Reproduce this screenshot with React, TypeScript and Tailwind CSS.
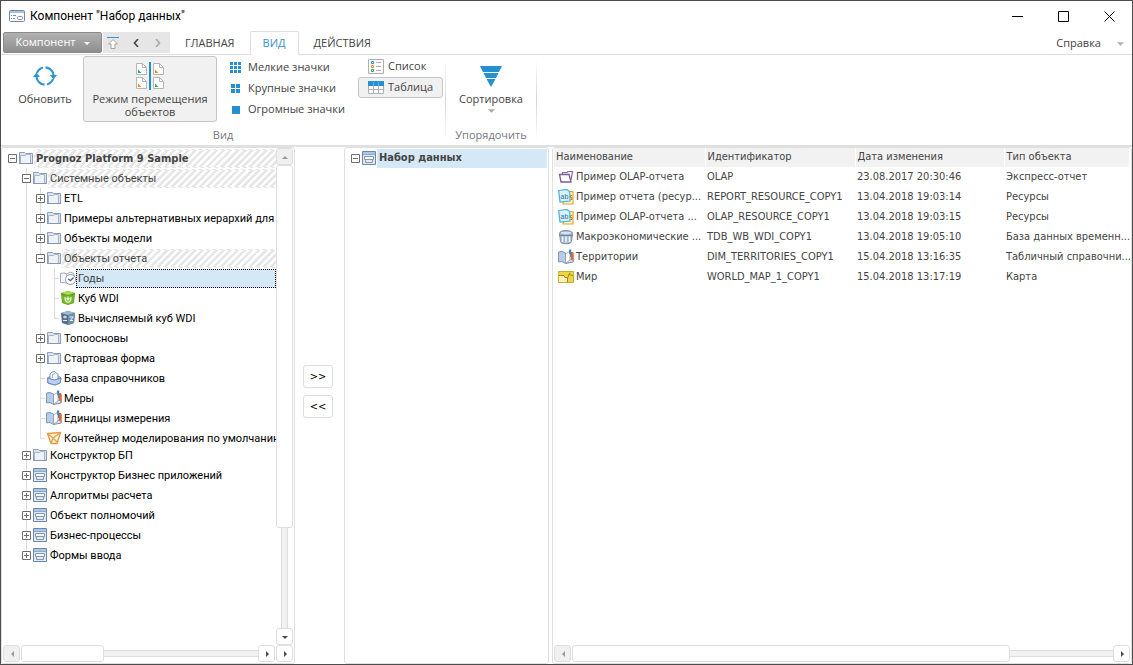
import { useState, type ReactNode } from "react";
import clsx from "clsx";

type IconName =
  | "folder" | "cabinet" | "calendar" | "cube" | "calcCube" | "dictBase"
  | "book" | "model" | "report" | "resource" | "timeBase" | "map";

type TreeNode = {
  id: string;
  label: string;
  icon: IconName;
  hatched?: boolean;
  bold?: boolean;
  children?: TreeNode[];
  closed?: boolean;
};

const TREE: TreeNode = {
  id: "root", label: "Prognoz Platform 9 Sample", icon: "folder", hatched: true, bold: true,
  children: [
    {
      id: "sys", label: "Системные объекты", icon: "folder", hatched: true,
      children: [
        { id: "etl", label: "ETL", icon: "folder", closed: true },
        { id: "alt", label: "Примеры альтернативных иерархий для т", icon: "folder", closed: true },
        { id: "models", label: "Объекты модели", icon: "folder", closed: true },
        {
          id: "report", label: "Объекты отчета", icon: "folder", hatched: true,
          children: [
            { id: "years", label: "Годы", icon: "calendar" },
            { id: "wdi", label: "Куб WDI", icon: "cube" },
            { id: "calc", label: "Вычисляемый куб WDI", icon: "calcCube" },
          ],
        },
        { id: "topo", label: "Топоосновы", icon: "folder", closed: true },
        { id: "start", label: "Стартовая форма", icon: "folder", closed: true },
        { id: "dict", label: "База справочников", icon: "dictBase" },
        { id: "measures", label: "Меры", icon: "book" },
        { id: "units", label: "Единицы измерения", icon: "book" },
        { id: "container", label: "Контейнер моделирования по умолчанию", icon: "model" },
      ],
    },
    { id: "bp", label: "Конструктор БП", icon: "folder", closed: true },
    { id: "apps", label: "Конструктор Бизнес приложений", icon: "cabinet", closed: true },
    { id: "algo", label: "Алгоритмы расчета", icon: "cabinet", closed: true },
    { id: "rights", label: "Объект полномочий", icon: "cabinet", closed: true },
    { id: "processes", label: "Бизнес-процессы", icon: "cabinet", closed: true },
    { id: "forms", label: "Формы ввода", icon: "cabinet", closed: true },
  ],
};

const COLUMNS = ["Наименование", "Идентификатор", "Дата изменения", "Тип объекта"];

const ROWS: { icon: IconName; name: string; code: string; date: string; type: string }[] = [
  { icon: "report", name: "Пример OLAP-отчета", code: "OLAP", date: "23.08.2017 20:30:46", type: "Экспресс-отчет" },
  { icon: "resource", name: "Пример отчета (ресур...", code: "REPORT_RESOURCE_COPY1", date: "13.04.2018 19:03:14", type: "Ресурсы" },
  { icon: "resource", name: "Пример OLAP-отчета ...", code: "OLAP_RESOURCE_COPY1", date: "13.04.2018 19:03:15", type: "Ресурсы" },
  { icon: "timeBase", name: "Макроэкономические ...", code: "TDB_WB_WDI_COPY1", date: "13.04.2018 19:05:10", type: "База данных временн..." },
  { icon: "book", name: "Территории", code: "DIM_TERRITORIES_COPY1", date: "15.04.2018 13:16:35", type: "Табличный справочни..." },
  { icon: "map", name: "Мир", code: "WORLD_MAP_1_COPY1", date: "15.04.2018 13:17:19", type: "Карта" },
];

function ObjectIcon({ name }: { name: IconName }) {
  return (
    <svg viewBox="0 0 16 16" className="size-4 shrink-0" fill="none" aria-hidden="true">
      {name === "folder" && (
        <>
          <path d="M1.500 13.500v-11h5l1 1h7v10z" fill="#dbe3ee" stroke="#8d9fb8" />
          <path d="M2.500 13.500v-8h5l1-1h4v9z" fill="#eef1f6" stroke="#a5b3c7" />
          <path d="M1 13.500h14" stroke="#8496b0" />
        </>
      )}
      {name === "cabinet" && (
        <>
          <path d="M1.500 1.500h13v13h-13z" fill="#dceafa" stroke="#6b88ab" />
          <path d="M2 2h12v2H2z" fill="#a9c6e6" />
          <path d="M2 4.500h12" stroke="#8fabcb" />
          <path d="M3.500 6.500h9v3h-9z" fill="#f7f9fb" stroke="#8a97a8" />
          <path d="M4.500 9.500h7v3h-7z" fill="#e6ebf1" stroke="#8a97a8" />
        </>
      )}
      {name === "calendar" && (
        <>
          <path d="M.5 3.500 4 3l3 1 3-2 4 1.500v8L7 13l-6.500-.5z" fill="#f5f6f8" stroke="#a3a9b2" />
          <path d="M6.500 4v8" stroke="#aeb4bd" />
          <circle cx="10.500" cy="9.500" r="5" fill="#fff" stroke="#9097a1" />
          <path d="m8 9 2.500 1.500L13.500 7.500" stroke="#456da5" strokeWidth="1.400" />
        </>
      )}
      {name === "cube" && (
        <>
          <path d="M1 3 8 1l7 2-1 10-6 2-6-2z" fill="#5d9c1d" />
          <path d="M1 3 8 1l7 2-7 2z" fill="#a7dc54" />
          <path d="M2 5.500h12l-.5 7-5.500 2-5.500-2z" fill="#75b62d" />
          <path d="M5 7c0 7 6 7 6 0M8 6.500v3.500M6.500 8l1.500 2 1.500-2" stroke="#effbd8" strokeWidth="1.200" />
        </>
      )}
      {name === "calcCube" && (
        <>
          <path d="M1 3 8 1l7 2-1 10-6 2-6-2z" fill="#536f8b" />
          <path d="M1 3 8 1l7 2-7 2z" fill="#9fb9cf" />
          <path d="M8 5v10l6-2 1-10z" fill="#6f8da8" />
          <path d="M3 7h4M3 10.500h4M5 5.500v3M10 11l3-4M9.500 7h4M10 10.500h3" stroke="#e8f1f8" />
        </>
      )}
      {name === "dictBase" && (
        <>
          <path d="m1.500 8 3-2h8l2.500 2-1 5-5 2-7-2z" fill="#a7c0e5" stroke="#6f90c0" />
          <path d="M4 9V4l2-2 3-.5 1 1.500 2 1v5l-3 1.500z" fill="#f4f8fd" stroke="#8d9db5" />
          <path d="M6.500 8V4.500l2.500-1" stroke="#a8b6ca" />
          <path d="m1.500 8 7 2 6.500-2-1 5-5 2-7-2z" fill="#b9d0f0" stroke="#6b8cc0" />
        </>
      )}
      {name === "book" && (
        <>
          <path d="M13 3h2l.7 1.500v8H13z" fill="#e6632c" />
          <path d="M11 .5h2.200V8H11z" fill="#2b85c6" />
          <path d="M.5 3 4 2.500 7.500 4v10.500L4 12.500l-3.500.5z" fill="#b5cdea" stroke="#8298b5" />
          <path d="M7.500 14.500 15 13V11l-3-1z" fill="#dfe4ec" stroke="#7f8da1" />
          <path d="M7.500 14.500 12 11V2L7.500 5z" fill="#fff" stroke="#8c98a8" strokeWidth=".8" />
          <path d="M11.200 1.500V5h1.500V1.500z" fill="#2b85c6" />
        </>
      )}
      {name === "model" && (
        <>
          <path d="m1.500 3.500 13-1-3.500 11H5z" fill="#fdf1dd" stroke="#e49a3f" strokeWidth="1.300" />
          <path d="m2 4 5 4 7-5M7 8l-2 5.500M7 8l4 4" stroke="#e6a14c" strokeWidth="1.300" />
        </>
      )}
      {name === "report" && (
        <>
          <path d="M4.500 5V3.500H9L10 2.500h4.500l-1.500 8.500" fill="#f6f2f9" stroke="#8a6ba0" strokeWidth="1.200" />
          <path d="M1.500 5.500h9.500l2 7.500H3z" fill="#fff" stroke="#7d5c95" strokeWidth="1.300" />
        </>
      )}
      {name === "resource" && (
        <>
          <path d="M7 2.500h8v12.500H5z" fill="#fdf1c9" stroke="#e8a628" strokeWidth="1.200" />
          <path d="m.7 1.500 8-1 3 2 .3 9.500-10 1z" fill="#d8f1fa" stroke="#48b2dc" strokeWidth="1.200" />
          <text x="2.500" y="9.500" fill="#276f96" fontSize="7" fontFamily="Liberation Sans, sans-serif">ab</text>
          <path d="M14 6.500h-1.500v2H14v2h-1.500" stroke="#c78017" />
        </>
      )}
      {name === "timeBase" && (
        <>
          <path d="M1.500 4.500c0-4 13-4 13 0l-1 8c0 3-11 3-11 0z" fill="#a3b7cf" stroke="#7890ad" />
          <ellipse cx="8" cy="4" rx="6" ry="2" fill="#d9e4ef" stroke="#8ba0ba" />
          <path d="M4.500 7.500v5.500M8 7.500v6M11.500 7.500v5.500" stroke="#f2f6fa" strokeWidth="1.600" />
          <path d="M1 6.500h14" stroke="#6e87a6" />
        </>
      )}
      {name === "map" && (
        <>
          <path d="M.5 2.500H15.500v11H.5z" fill="#ecd44b" stroke="#c9ac2c" />
          <path d="M1 7h5v2h3v4H1z" fill="#fbf3b5" />
          <path d="M1 6.500h5l1 2h3l1-3 1-2M9.500 9v4M11 5.500l4 1" stroke="#a88a17" />
        </>
      )}
    </svg>
  );
}

function Arrow({ dir, big = false, className }: { dir: "up" | "down" | "left" | "right"; big?: boolean; className?: string }) {
  const paths = { up: "M0 5h6L3 2z", down: "M0 2h6L3 5z", left: "M5 0v6L2 3z", right: "M2 0v6l3-3z" };
  return (
    <svg viewBox="0 0 6 6" className={clsx(big ? "size-[7px]" : "size-1.5", className)} fill="currentColor" aria-hidden="true">
      <path d={paths[dir]} />
    </svg>
  );
}

function ScrollButton({ dir, label, disabled = false }: { dir: "up" | "down" | "left" | "right"; label: string; disabled?: boolean }) {
  return (
    <button
      type="button"
      aria-label={label}
      disabled={disabled}
      className={clsx(
        "flex size-[17px] shrink-0 items-center justify-center rounded-[3px] border border-[#dedede]",
        disabled ? "bg-[#f0f0f0] text-[#999999]" : "bg-white text-[#4a4a4a]",
      )}
    >
      <Arrow dir={dir} />
    </button>
  );
}

function HScroll({ thumb }: { thumb: number }) {
  return (
    <div className="flex min-w-0 flex-1 items-center">
      <ScrollButton dir="left" label="Прокрутить влево" disabled />
      <div className="flex h-[17px] flex-1 items-center pl-px">
        <div className="h-[17px] rounded-[3px] border border-[#dedede] bg-white" style={{ width: `${thumb}%` }} />
        <div className="h-[7px] flex-1 border-y border-[#dedede] bg-[#f2f2f2]" />
      </div>
      <ScrollButton dir="right" label="Прокрутить вправо" />
    </div>
  );
}

function Expander({ open, onClick }: { open: boolean; onClick?: () => void }) {
  return (
    <button
      type="button"
      aria-label={open ? "Свернуть" : "Развернуть"}
      onClick={onClick}
      className="relative size-[9px] shrink-0 bg-white"
    >
      <svg viewBox="0 0 9 9" className="block size-[9px]" fill="none" aria-hidden="true">
        <path d={open ? "M.5.5h8v8h-8zM2 4.500h5" : "M.5.5h8v8h-8zM2 4.500h5M4.500 2v5"} stroke="#6e6e6e" />
      </svg>
    </button>
  );
}

function TreeItem({ node, selected, onSelect }: { node: TreeNode; selected: string; onSelect: (id: string) => void }) {
  const [open, setOpen] = useState(!node.closed);
  const isSelected = node.id === selected;
  const expandable = Boolean(node.children) || node.closed;
  return (
    <li>
      <div className="flex h-5 items-center">
        {expandable ? (
          <Expander open={open} onClick={() => setOpen(!open)} />
        ) : (
          <span className="ml-1 h-px w-[5px] shrink-0 bg-[#dcdcdc]" />
        )}
        <span className="ml-px flex shrink-0">
          <ObjectIcon name={node.icon} />
        </span>
        <button
          type="button"
          onClick={() => onSelect(node.id)}
          className={clsx(
            "h-[19px] flex-1 border pl-px text-left leading-[18px] whitespace-nowrap",
            node.bold ? "font-['DejaVu_Sans_Condensed',sans-serif] font-bold" : "font-[Roboto,sans-serif]",
            isSelected ? "border-dotted border-black bg-[#d5e8f5]" : "border-transparent",
            node.hatched && !isSelected &&
              "bg-[repeating-linear-gradient(135deg,#ffffff_0,#ffffff_2px,#e6e6e6_3px,#e6e6e6_5px)]",
            isSelected || node.hatched ? "text-[#444444]" : "text-black",
          )}
        >
          {node.label}
        </button>
      </div>
      {open && node.children && (
        <ul className={clsx("relative ml-3.5", node.id === "sys" && "-mb-[3px]")}>
          <span className="absolute top-0 bottom-2.5 left-1 w-px bg-[#dcdcdc]" />
          {node.children.map((child) => (
            <TreeItem key={child.id} node={child} selected={selected} onSelect={onSelect} />
          ))}
        </ul>
      )}
    </li>
  );
}

function TitleBar() {
  return (
    <header className="flex h-[30px] items-center pl-2 font-[Roboto,sans-serif] text-xs text-black">
      <svg viewBox="0 0 16 12" className="h-3 w-4" fill="none" aria-hidden="true">
        <rect x=".5" y=".5" width="15" height="11" rx="1" fill="#fbfcfd" stroke="#7286a0" />
        <path d="M1 1h14v2H1z" fill="#a9c3e6" />
        <path d="M2 5.500h1M4 5.500h3M2 8.500h1M4 8.500h2" stroke="#7f8a99" />
        <rect x="8.500" y="6.500" width="5" height="3" rx="1" stroke="#8a94a1" />
      </svg>
      <h1 className="ml-[5px] flex-1">Компонент "Набор данных"</h1>
      <button type="button" aria-label="Свернуть окно" className="flex h-full w-[46px] items-center justify-center">
        <svg viewBox="0 0 11 11" className="size-[11px]" stroke="#000"><path d="M0 5.500h11" /></svg>
      </button>
      <button type="button" aria-label="Развернуть окно" className="flex h-full w-[46px] items-center justify-center">
        <svg viewBox="0 0 11 11" className="size-[11px]" stroke="#000" fill="none"><path d="M.5.5h10v10H.5z" /></svg>
      </button>
      <button type="button" aria-label="Закрыть" className="flex h-full w-[46px] items-center justify-center">
        <svg viewBox="0 0 11 11" className="size-[11px]" stroke="#000" fill="none"><path d="m.5.5 10 10M10.500.5l-10 10" /></svg>
      </button>
    </header>
  );
}

function TabBar() {
  return (
    <nav className="flex h-6 items-start border-b border-[#dedede] pl-0.5 text-[11px] text-[#444444]">
      <button
        type="button"
        className="mt-px flex h-[21px] w-[99px] items-center justify-center gap-2 rounded-[2px] border border-[#8a8a8a] bg-linear-to-b from-[#b0b0b0] to-[#8f8f8f] text-white"
      >
        Компонент
        <Arrow dir="down" />
      </button>
      <div className="mt-px ml-px flex h-[21px] w-[67px] items-center gap-3.5 bg-[#e6e6e6] pl-1">
        <button type="button" aria-label="Вверх">
          <svg viewBox="0 0 12 12" className="size-3" fill="none">
            <path d="M0 .5h12" stroke="#3794cf" />
            <path d="M6 2.500 10.500 7H8v4.500H4V7H1.500z" fill="#fff" stroke="#a5a5a5" />
          </svg>
        </button>
        <button type="button" aria-label="Назад">
          <svg viewBox="0 0 6 8" className="h-2 w-1.5" fill="none"><path d="M5 0 1.500 4 5 8" stroke="#444" strokeWidth="1.600" /></svg>
        </button>
        <button type="button" aria-label="Вперёд" className="pl-0.5">
          <svg viewBox="0 0 6 8" className="h-2 w-1.5" fill="none"><path d="m1 0 3.500 4L1 8" stroke="#a8a8a8" strokeWidth="1.600" /></svg>
        </button>
      </div>
      <button type="button" className="h-6 px-[15px]">ГЛАВНАЯ</button>
      <button type="button" className="-mb-px h-6 w-[49px] rounded-t-[2px] border border-b-0 border-[#dedede] bg-white text-[#3a8fc9]">
        ВИД
      </button>
      <button type="button" className="h-6 px-[15px]">ДЕЙСТВИЯ</button>
      <button type="button" className="ml-auto flex h-6 items-center gap-4 pr-2">
        Справка
        <Arrow dir="down" big className="text-[#b0b0b0]" />
      </button>
    </nav>
  );
}

function RibbonGroup({ title, className, children }: { title: string; className?: string; children: ReactNode }) {
  return (
    <section className="flex">
      <div className={clsx("flex flex-col", className)}>
        <div className="flex flex-1">{children}</div>
        <h2 className="h-[18px] text-center leading-4 text-[#77777f]">{title}</h2>
      </div>
      <div className="my-1 w-px bg-linear-to-b from-transparent via-[#d4d4d4] to-transparent" />
    </section>
  );
}

function SquaresIcon({ n }: { n: 1 | 2 | 3 }) {
  const size = { 1: 8, 2: 4, 3: 3 }[n];
  const step = { 1: 8, 2: 5, 3: 4 }[n];
  const start = { 1: 2, 2: 1, 3: 0 }[n];
  const cells = Array.from({ length: n }, (_, i) => start + i * step);
  return (
    <svg viewBox="0 0 12 12" className="size-3 shrink-0" fill="#2490d0" aria-hidden="true">
      {cells.flatMap((x) => cells.map((y) => <rect key={`${x}-${y}`} x={x} y={y} width={size} height={size} />))}
    </svg>
  );
}

function MoveModeIcon() {
  const pages = [
    { x: 1, y: 1, c: "#1fae54" },
    { x: 18, y: 1, c: "#f08a1c" },
    { x: 1, y: 15, c: "#f08a1c" },
    { x: 18, y: 15, c: "#1fae54" },
  ];
  return (
    <svg viewBox="0 0 30 28" className="h-7 w-[30px] shrink-0" fill="none" aria-hidden="true">
      {pages.map((p) => (
        <g key={`${p.x}-${p.y}`} transform={`translate(${p.x} ${p.y})`}>
          <path d="M.5.5h6l4 4v7H.5z" fill="#fff" stroke="#b5b5b5" />
          <path d="M6.500.5v4h4" stroke="#b5b5b5" />
          <path d="M2 6.500l3.500 3.500H2z" fill={p.c} />
        </g>
      ))}
      <path d="M15 0v28" stroke="#1f8fce" strokeWidth="2" />
    </svg>
  );
}

function Ribbon() {
  return (
    <div className="flex h-[92px] border-b-2 border-[#e0e0e0] text-[11px] text-[#444444]">
      <RibbonGroup title="Вид" className="w-[444px]">
        <button type="button" className="ml-2 flex h-[66px] w-[72px] flex-col items-center pt-2.5 leading-[13px]">
          <svg viewBox="0 0 24 22" className="h-[22px] w-6 shrink-0" fill="none" aria-hidden="true">
            <path d="M4 8A8.700 8.700 0 0 1 10 2.500M12.500 2.300A8.700 8.700 0 0 1 20.500 10M20 14A8.700 8.700 0 0 1 14 19.500M11.500 19.700A8.700 8.700 0 0 1 3.500 12" stroke="#2e94d1" strokeWidth="2.200" />
            <path d="M17 10h7l-3.500 4.500zM0 12h7L3.500 7.500z" fill="#2e94d1" />
          </svg>
          <span className="mt-[5px]">Обновить</span>
        </button>
        <button
          type="button"
          className="mt-px ml-0.5 flex h-[66px] w-[134px] flex-col items-center rounded-[3px] border border-[#c6c6c6] bg-[#f1f1f1] pt-[5px] leading-[13px]"
        >
          <MoveModeIcon />
          <span className="mt-0.5">Режим перемещения<br />объектов</span>
        </button>
        <div className="ml-[13px] flex flex-col pt-0.5">
          <button type="button" className="flex h-[21px] items-center gap-1.5"><SquaresIcon n={3} />Мелкие значки</button>
          <button type="button" className="flex h-[21px] items-center gap-1.5"><SquaresIcon n={2} />Крупные значки</button>
          <button type="button" className="flex h-[21px] items-center gap-1.5"><SquaresIcon n={1} />Огромные значки</button>
        </div>
        <div className="mr-0.5 ml-auto flex w-[85px] flex-col pt-px">
          <button type="button" className="flex h-[21px] items-center gap-1 pl-2.5">
            <svg viewBox="0 0 16 15" className="h-[15px] w-4" fill="none" aria-hidden="true">
              <path d="M.5.5h15v14H.5z" fill="#fff" stroke="#b0b0b0" />
              <path d="M3.500 2.500h2v2h-2z" stroke="#2490d0" />
              <path d="M3.500 6.500h2v2h-2z" stroke="#e8912b" />
              <path d="M3.500 10.500h2v2h-2z" stroke="#1fae54" />
              <path d="M8 3.500h5M8 7.500h5M8 11.500h5" stroke="#b0b0b0" />
            </svg>
            Список
          </button>
          <button type="button" className="flex h-[21px] items-center gap-1 rounded-[3px] border border-[#c6c6c6] bg-[#f1f1f1] pl-[9px]">
            <svg viewBox="0 0 16 13" className="h-[13px] w-4" fill="none" aria-hidden="true">
              <path d="M.5.5h15v12H.5z" fill="#fff" stroke="#b0b0b0" />
              <path d="M.5 8.500h15M5.500 5v8M10.500 5v8" stroke="#b0b0b0" />
              <path d="M0 0h16v5H0z" fill="#2490d0" />
              <path d="M5.500 1v4M10.500 1v4" stroke="#61b2e2" />
            </svg>
            Таблица
          </button>
        </div>
      </RibbonGroup>
      <RibbonGroup title="Упорядочить" className="w-[90px]">
        <button type="button" className="flex h-[66px] w-full flex-col items-center pt-[11px] leading-[13px]">
          <svg viewBox="0 0 22 21" className="h-[21px] w-[22px] shrink-0" fill="#2490d0" aria-hidden="true">
            <path d="M0 0h22l-3 6H3zM3.500 7h15l-2.500 5H6zM6.500 13h9L11 21z" />
          </svg>
          <span className="mt-[5px]">Сортировка</span>
          <Arrow dir="down" big className="mt-0.5 text-[#a8a8a8]" />
        </button>
      </RibbonGroup>
    </div>
  );
}

function ObjectsPanel() {
  const [selected, setSelected] = useState("years");
  return (
    <section className="flex w-[294px] shrink-0 flex-col rounded-[3px] border border-[#e0e0e0] px-px pb-px">
      <div className="flex min-h-0 flex-1">
        <ul className="min-w-0 flex-1 overflow-hidden pl-[5px]">
          <TreeItem node={TREE} selected={selected} onSelect={setSelected} />
        </ul>
        <div className="flex w-[17px] shrink-0 flex-col items-center">
          <ScrollButton dir="up" label="Прокрутить вверх" disabled />
          <div className="h-[73%] w-[17px] rounded-[3px] border border-[#dedede] bg-white" />
          <div className="w-[7px] flex-1 border-x border-[#dedede] bg-[#f2f2f2]" />
          <ScrollButton dir="down" label="Прокрутить вниз" />
        </div>
      </div>
      <div className="flex gap-px">
        <HScroll thumb={35} />
        <ScrollButton dir="right" label="Далее" />
      </div>
    </section>
  );
}

function DataSetTable() {
  return (
    <section className="ml-[3px] flex min-w-0 flex-1 flex-col rounded-[3px] border border-[#e0e0e0] px-px pb-px">
      <div className="min-h-0 flex-1 overflow-hidden">
        <table className="w-full table-fixed border-collapse text-[#444444]">
          <colgroup>
            <col className="w-[151px]" />
            <col className="w-[150px]" />
            <col className="w-[149px]" />
            <col />
          </colgroup>
          <thead>
            <tr className="h-[19px]">
              {COLUMNS.map((c) => (
                <th key={c} className="border-r border-b border-white bg-[#f2f2f2] p-0 pl-0.5 text-left leading-4 font-normal">{c}</th>
              ))}
            </tr>
          </thead>
          <tbody>
            {ROWS.map((r) => (
              <tr key={r.code} className="h-5">
                <td className="p-0 pl-1">
                  <div className="flex items-center gap-0.5">
                    <ObjectIcon name={r.icon} />
                    <span className="whitespace-nowrap">{r.name}</span>
                  </div>
                </td>
                <td className="p-0 pl-0.5 whitespace-nowrap">{r.code}</td>
                <td className="p-0 pl-0.5 whitespace-nowrap">{r.date}</td>
                <td className="p-0 pl-0.5 whitespace-nowrap">{r.type}</td>
              </tr>
            ))}
          </tbody>
        </table>
      </div>
      <div className="flex">
        <HScroll thumb={81} />
      </div>
    </section>
  );
}

export default function App() {
  return (
    <div className="flex h-screen flex-col overflow-hidden border border-[#4d4d4d] bg-white font-['Open_Sans','Noto_Sans',sans-serif]">
      <TitleBar />
      <TabBar />
      <Ribbon />
      <main className="flex min-h-0 flex-1 font-['DejaVu_Sans_Condensed','DejaVu_Sans',sans-serif] text-[11px] leading-4">
        <ObjectsPanel />
        <div className="flex w-[49px] shrink-0 flex-col justify-center gap-[7px] pb-7 pl-2 text-black">
          <button type="button" className="h-[23px] w-[30px] rounded-[3px] border border-[#dedede] bg-white">&gt;&gt;</button>
          <button type="button" className="h-[23px] w-[30px] rounded-[3px] border border-[#dedede] bg-white">&lt;&lt;</button>
        </div>
        <section className="w-[205px] shrink-0 rounded-[3px] border border-[#e0e0e0] px-px pb-px">
          <div className="flex h-5 items-center pl-[5px]">
            <Expander open />
            <span className="ml-px flex"><ObjectIcon name="cabinet" /></span>
            <span className="h-[19px] flex-1 bg-[#d5e8f5] pl-0.5 leading-[18px] font-bold text-[#444444]">Набор данных</span>
          </div>
        </section>
        <DataSetTable />
      </main>
    </div>
  );
}
